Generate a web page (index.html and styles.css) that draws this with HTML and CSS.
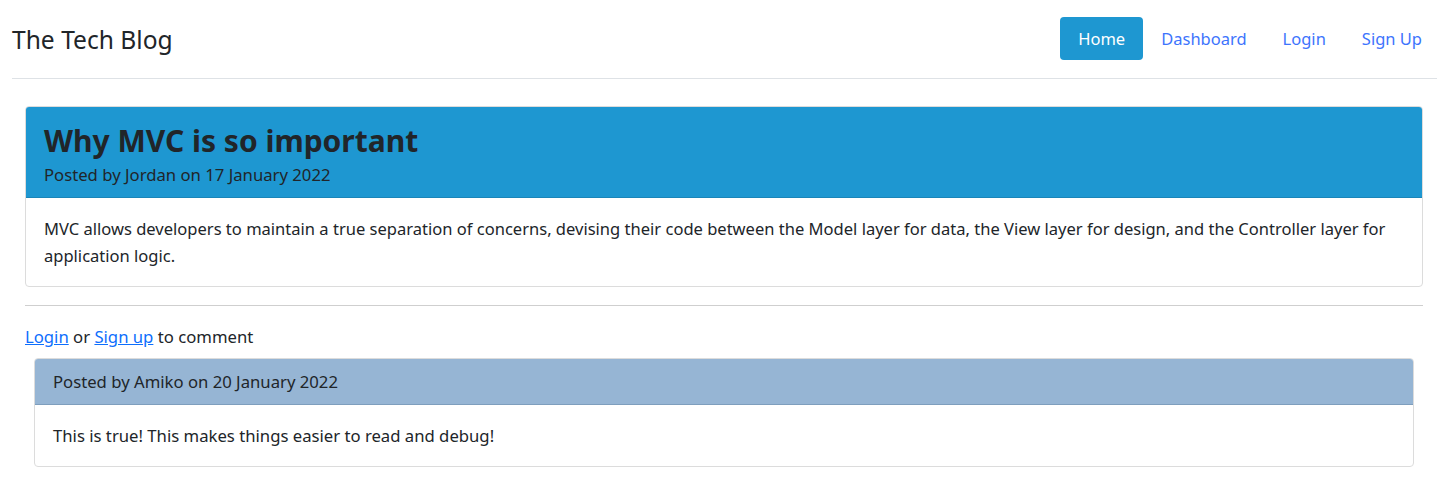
FILE: index.html
```html
<!DOCTYPE html>
<html lang="en">
<head>
<meta charset="utf-8">
<title>The Tech Blog</title>
<link rel="stylesheet" href="styles.css">
</head>
<body>
<header class="site-header">
  <h1 class="brand">The Tech Blog</h1>
  <nav class="nav">
    <a class="nav-link active" href="#">Home</a>
    <a class="nav-link" href="#">Dashboard</a>
    <a class="nav-link" href="#">Login</a>
    <a class="nav-link" href="#">Sign Up</a>
  </nav>
</header>
<main class="main">
  <article class="card post">
    <div class="card-header post-header">
      <h2 class="post-title">Why MVC is so important</h2>
      <p class="post-meta">Posted by Jordan on 17 January 2022</p>
    </div>
    <div class="card-body post-body">
      <p>MVC allows developers to maintain a true separation of concerns, devising their code between the Model layer for data, the View layer for design, and the Controller layer for application logic.</p>
    </div>
  </article>
  <hr class="divider">
  <p class="comment-prompt"><a href="#">Login</a> or <a href="#">Sign up</a> to comment</p>
  <section class="comments">
    <div class="card comment">
      <div class="card-header comment-header">Posted by Amiko on 20 January 2022</div>
      <div class="card-body comment-body">This is true! This makes things easier to read and debug!</div>
    </div>
  </section>
</main>
</body>
</html>
```
FILE: styles.css
```css
* { box-sizing: border-box; }
html, body { margin: 0; padding: 0; }
body {
  font-family: "Noto Sans", "Open Sans", sans-serif;
  font-size: 16.7px;
  line-height: 1.5;
  color: #212529;
  background: #fff;
}
a { color: #0d6efd; }
.site-header {
  display: flex;
  align-items: center;
  justify-content: space-between;
  margin: 0 6px 0 12px;
  height: 79px;
  border-bottom: 1px solid #dee2e6;
}
.brand {
  margin: 0;
  font-size: 24.6px;
  font-weight: 400;
  line-height: 1.2;
  padding-top: 2px;
}
.nav { display: flex; align-items: center; margin: 0 -3px 1px 0; }
.nav-link {
  display: block;
  height: 43px;
  line-height: 43px;
  padding: 0 18px;
  font-size: 16.5px;
  color: #3d74fd;
  text-decoration: none;
  border-radius: 4px;
}
.nav-link.active { background: #1e97d1; color: #fff; }
.main { padding: 27px 20px 0 25px; }
.card {
  border: 1px solid #dcdcdc;
  border-radius: 4px;
  overflow: hidden;
}
.post-header {
  background: #1e97d1;
  padding: 14px 18px 10px;
  border-bottom: 1px solid #1a85b8;
}
.post-title {
  margin: 0;
  font-size: 30px;
  font-weight: 700;
  line-height: 39px;
}
.post-meta { margin: 2px 0 0; font-size: 16.7px; }
.post-body { padding: 17px 18px 17px; font-size: 16.55px; }
.post-body p { margin: 0; line-height: 27px; }
.divider {
  margin: 18px 0 0;
  border: 0;
  border-top: 1px solid #cfcfcf;
}
.comment-prompt { margin: 18px 0 9px; line-height: 25px; }
.comments { padding: 0 9px 0 9px; }
.comment-header {
  background: #96b5d4;
  padding: 0 18px;
  height: 46px;
  line-height: 45px;
  border-bottom: 1px solid #7e9ebd;
}
.comment-body { padding: 18px 18px; line-height: 25px; }
```
